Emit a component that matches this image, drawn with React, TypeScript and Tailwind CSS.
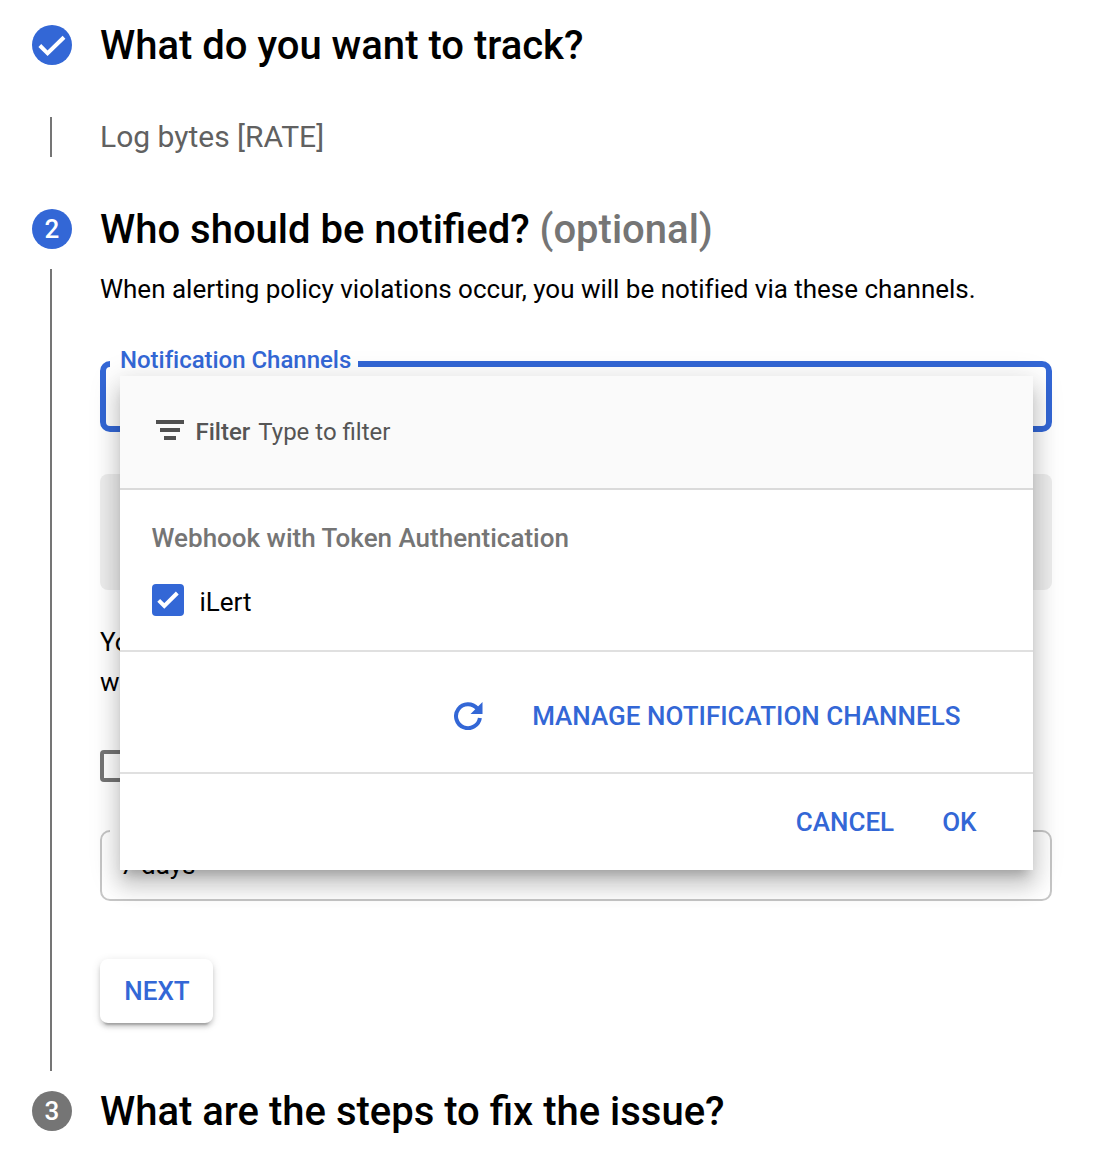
import React from "react";

function Header({ badge, active = true, children }: { badge: React.ReactNode; active?: boolean; children: React.ReactNode }) {
  return (
    <div className="flex h-10 items-center gap-7 pl-8">
      <div
        className={`flex size-10 shrink-0 items-center justify-center rounded-full text-[26px] font-medium text-white ${
          active ? "bg-[#3367d6]" : "bg-[#757575]"
        }`}
      >
        {badge}
      </div>
      <h2 className="pt-0.5 text-[40px] leading-10 font-medium whitespace-nowrap text-black">{children}</h2>
    </div>
  );
}

function NotificationMenu() {
  return (
    <div className="absolute top-[15px] left-5 z-10 flex h-[494px] w-[913px] flex-col bg-white text-[26px] shadow-[0_10px_10px_-6px_rgba(0,0,0,0.2),0_16px_20px_2px_rgba(0,0,0,0.14),0_6px_28px_4px_rgba(0,0,0,0.12)]">
      <div className="flex h-[114px] items-center border-b-2 border-[#dadada] bg-[#fafafa] pl-9 text-[24px] text-[#555]">
        <svg width="28" height="20" viewBox="0 0 28 20" fill="#505050" className="mr-[11.5px] -mt-1">
          <path d="M0 0h28v4H0zM4 8h20v4H4zM8 16h12v4H8z" />
        </svg>
        <span className="mr-2 font-medium">Filter</span>
        <span>Type to filter</span>
      </div>
      <div className="h-[162px] border-b-2 border-[#e0e0e0] px-8 pt-8">
        <div className="-ml-[0.4px] leading-8 font-medium text-[#757575]">Webhook with Token Authentication</div>
        <div className="mt-[30px] flex h-8 items-center gap-[15.5px]">
          <div className="flex size-8 items-center justify-center rounded-[4px] bg-[#3367d6]">
            <svg width="32" height="32" viewBox="0 0 32 32" fill="none" stroke="#fff" strokeWidth="4">
              <path d="M6.7 16.3l5.6 5.6L25.3 9" />
            </svg>
          </div>
          <span className="pt-1 text-black">iLert</span>
        </div>
      </div>
      <div className="flex h-[122px] items-center justify-end border-b-2 border-[#e0e0e0] pt-2 pr-[72.5px] font-medium text-[#3367d6]">
        <svg width="29" height="28" viewBox="0 0 29 28" className="mr-[49px]">
          <path d="M23.2 6.4A12 12 0 1 0 25.9 16" fill="none" stroke="currentColor" strokeWidth="4" />
          <path d="M28.5 0v12h-12z" fill="currentColor" />
        </svg>
        <button>MANAGE NOTIFICATION CHANNELS</button>
      </div>
      <div className="flex h-24 items-center justify-end gap-12 pr-[56.5px] font-medium text-[#3367d6]">
        <button>CANCEL</button>
        <button>OK</button>
      </div>
    </div>
  );
}

export default function App() {
  return (
    <main className="h-[1174px] w-[1118px] overflow-hidden bg-white pt-[25px] font-['Roboto',sans-serif] text-[26px] text-black">
      <Header
        badge={
          <svg width="40" height="40" viewBox="0 0 40 40" fill="none" stroke="#fff" strokeWidth="4">
            <path d="M7.8 20.5l7.8 7.8L32 12.3" />
          </svg>
        }
      >
        What do you want to track?
      </Header>
      <div className="mt-[52px] ml-[50px] flex h-10 items-center border-l-2 border-[#757575] pb-0.5 pl-12 text-[30px] text-[#616161]">
        Log bytes [RATE]
      </div>
      <div className="mt-[52px]">
        <Header badge="2">
          Who should be notified? <span className="text-[#757575]">(optional)</span>
        </Header>
      </div>
      <section className="mt-5 ml-[50px] h-[802px] w-[1002px] border-l-2 border-[#757575] pl-12">
        <p className="h-10 leading-10 tracking-[-0.01px] whitespace-nowrap">
          When alerting policy violations occur, you will be notified via these channels.
        </p>
        <div className="relative mt-[52px]">
          <div className="h-[71px] rounded-[10px] border-[6px] border-[#3367d6]" />
          <div className="absolute -top-4 left-[10px] h-8 w-[248px] bg-white pl-[10px] text-[24px] leading-[31px] font-medium tracking-[-0.03px] whitespace-nowrap text-[#3367d6]">
            Notification Channels
          </div>
          <NotificationMenu />
        </div>
        <div className="mt-[42px] h-[116px] rounded-lg bg-[#eeeeee]" />
        <p className="mt-8 leading-10">
          You can select multiple notification channels
          <br />
          when creating a policy.
        </p>
        <div className="mt-12 size-8 rounded-[4px] border-4 border-[#757575]" />
        <div className="relative mt-12 flex h-[71px] items-center rounded-[10px] border-2 border-[#c6c6c6] pl-[18px]">
          <span>7 days</span>
          <div className="absolute -top-[2px] left-2 h-[2px] w-[240px] bg-white" />
        </div>
        <button className="mt-[58px] h-16 w-[113px] rounded-lg bg-white pl-px font-medium text-[#3367d6] shadow-[0_6px_2px_-4px_rgba(0,0,0,0.2),0_4px_4px_0_rgba(0,0,0,0.14),0_2px_10px_0_rgba(0,0,0,0.12)]">
          NEXT
        </button>
      </section>
      <div className="mt-5">
        <Header badge="3" active={false}>
          What are the steps to fix the issue?
        </Header>
      </div>
    </main>
  );
}
